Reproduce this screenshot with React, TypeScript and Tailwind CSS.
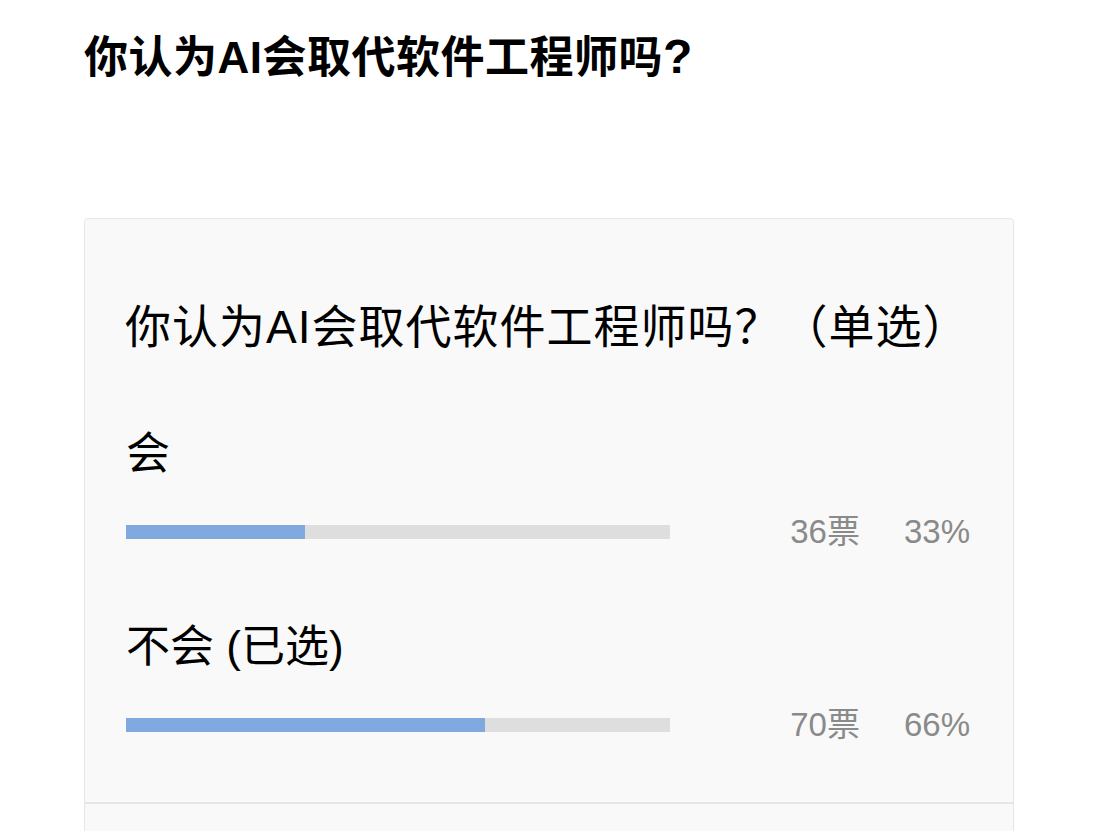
import React from "react";

const options = [
  { label: "会", votes: 36, pct: 33, fill: 179 },
  { label: "不会 (已选)", votes: 70, pct: 66, fill: 359 },
];

export default function App() {
  return (
    <div
      className="w-full h-[831px] overflow-hidden bg-white text-black"
      style={{ fontFamily: '"Liberation Sans", "Noto Sans CJK SC", sans-serif' }}
    >
      <h1 className="h-[82px] pl-[84px] pt-[34px] text-[44px] font-bold leading-[48px] tracking-[0.5px]">
        你认为AI会取代软件工程师吗<span className="text-[48px] leading-[0]">?</span>
      </h1>
      <div className="mt-[136px] ml-[84px] w-[930px] h-[700px] rounded-[4px] border border-[#e6e6e6] bg-[#f9f9f9]">
        <div className="pl-[40px] pr-[43px] pt-[78px] pb-[57px]">
          <div className="text-[46px] leading-[60px] tracking-[1px]">你认为AI会取代软件工程师吗？（单选）</div>
          {options.map((o, i) => (
            <div key={i} className={i === 0 ? "mt-[67px]" : "mt-[65px]"}>
              <div className="pl-[1px] text-[44px] leading-[60px]">{o.label}</div>
              <div className="mt-[28px] h-[40px] flex items-center justify-between">
                <div className="ml-[1px] w-[544px] h-[14px] bg-[#dedede]">
                  <div className="h-full bg-[#80aadf]" style={{ width: o.fill }} />
                </div>
                <div className="flex items-center gap-[44px] text-[33px] text-[#8a8a8a]">
                  <span>{o.votes}票</span>
                  <span>{o.pct}%</span>
                </div>
              </div>
            </div>
          ))}
        </div>
        <div className="border-t-2 border-[#e6e6e6]" />
      </div>
    </div>
  );
}
